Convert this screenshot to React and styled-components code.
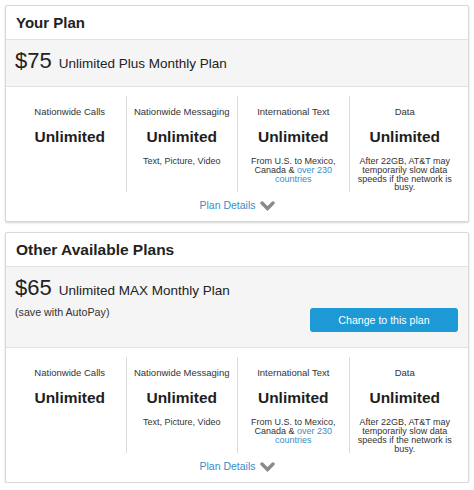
import styled, { createGlobalStyle } from "styled-components"

const Global = createGlobalStyle`
*, *::before, *::after {
  box-sizing: border-box;
}
body {
  margin: 0;
  background: #fff;
  font-family: "Liberation Sans", Arial, sans-serif;
  color: #222;
}
`

const Page = styled.div`
padding: 5px 5px 0 5px;
display: flex;
flex-direction: column;
gap: 10px;
`

const Card = styled.section`
border: 1px solid #d8d8d8;
border-radius: 2px;
box-shadow: 0 1px 2px rgba(0, 0, 0, 0.18);
background: #fff;
`

const CardHeader = styled.h2`
margin: 0;
height: 34px;
line-height: 34px;
padding: 0 10px;
font-size: ${(p) => (p.$wide ? "15.5px" : "15px")};
font-weight: 700;
color: #222;
border-bottom: 1px solid #e2e2e2;
`

const PriceRow = styled.div`
display: flex;
justify-content: space-between;
align-items: flex-start;
padding: 8px 10px 12px 9px;
background: #f5f5f5;
border-bottom: 1px solid #e2e2e2;
`

const PriceInfo = styled.div`
display: flex;
flex-direction: column;
`

const PriceLine = styled.div`
display: flex;
align-items: baseline;
height: 26px;
`

const Amount = styled.span`
font-size: 22px;
color: #222;
margin-right: 7px;
`

const PlanName = styled.span`
font-size: 13.5px;
color: #222;
`

const Save = styled.div`
font-size: 10.7px;
line-height: 14px;
margin-top: 4px;
color: #333;
`

const ChangeButton = styled.button`
margin: 33px 0 3px 0;
width: 148px;
height: 24px;
border: none;
border-radius: 3px;
background: #1d9ad6;
color: #fff;
font-family: "Liberation Sans", Arial, sans-serif;
font-size: 10.6px;
cursor: pointer;
`

const Features = styled.div`
padding: 9px 8px 9px 8px;
display: flex;
flex-direction: column;
align-items: center;
`

const Grid = styled.div`
width: 100%;
display: grid;
grid-template-columns: repeat(4, 1fr);
`

const Column = styled.div`
min-height: 96px;
padding: 10px 4px 0 4px;
text-align: center;
border-left: ${(p) => (p.$first ? "none" : "1px solid #dcdcdc")};
`

const Label = styled.div`
font-size: 9.5px;
line-height: 12px;
color: #333;
`

const Value = styled.div`
margin-top: 9px;
font-size: 15.5px;
font-weight: 700;
line-height: 20px;
color: #1e1e1e;
`

const Sub = styled.div`
margin-top: 10px;
font-size: 9px;
line-height: 8.8px;
color: #333;
`

const Link = styled.span`
color: #3a8dc7;
`

const DetailsLink = styled.a`
margin-top: 7px;
display: flex;
align-items: center;
gap: 4px;
font-size: 10.5px;
line-height: 13px;
color: #3a8dc7;
text-decoration: none;
`

const Chevron = () => (
  <svg width="15" height="10" viewBox="0 0 15 10">
    <polyline points="2,2 7.5,7.5 13,2" fill="none" stroke="#8a8a8a" strokeWidth="3.4" strokeLinecap="round" strokeLinejoin="miter" />
  </svg>
)

const FeatureList = () => (
  <Features>
    <Grid>
      <Column $first>
        <Label>Nationwide Calls</Label>
        <Value>Unlimited</Value>
      </Column>
      <Column>
        <Label>Nationwide Messaging</Label>
        <Value>Unlimited</Value>
        <Sub>Text, Picture, Video</Sub>
      </Column>
      <Column>
        <Label>International Text</Label>
        <Value>Unlimited</Value>
        <Sub>
          From U.S. to Mexico,<br />
          Canada &amp; <Link>over 230<br />countries</Link>
        </Sub>
      </Column>
      <Column>
        <Label>Data</Label>
        <Value>Unlimited</Value>
        <Sub>
          After 22GB, AT&amp;T may<br />
          temporarily slow data<br />
          speeds if the network is<br />
          busy.
        </Sub>
      </Column>
    </Grid>
    <DetailsLink href="#">
      Plan Details <Chevron />
    </DetailsLink>
  </Features>
)

const App = () => (
  <Page>
    <Global />
    <Card>
      <CardHeader>Your Plan</CardHeader>
      <PriceRow>
        <PriceInfo>
          <PriceLine>
            <Amount>$75</Amount>
            <PlanName>Unlimited Plus Monthly Plan</PlanName>
          </PriceLine>
        </PriceInfo>
      </PriceRow>
      <FeatureList />
    </Card>
    <Card>
      <CardHeader $wide>Other Available Plans</CardHeader>
      <PriceRow>
        <PriceInfo>
          <PriceLine>
            <Amount>$65</Amount>
            <PlanName>Unlimited MAX Monthly Plan</PlanName>
          </PriceLine>
          <Save>(save with AutoPay)</Save>
        </PriceInfo>
        <ChangeButton>Change to this plan</ChangeButton>
      </PriceRow>
      <FeatureList />
    </Card>
  </Page>
)

export default App
